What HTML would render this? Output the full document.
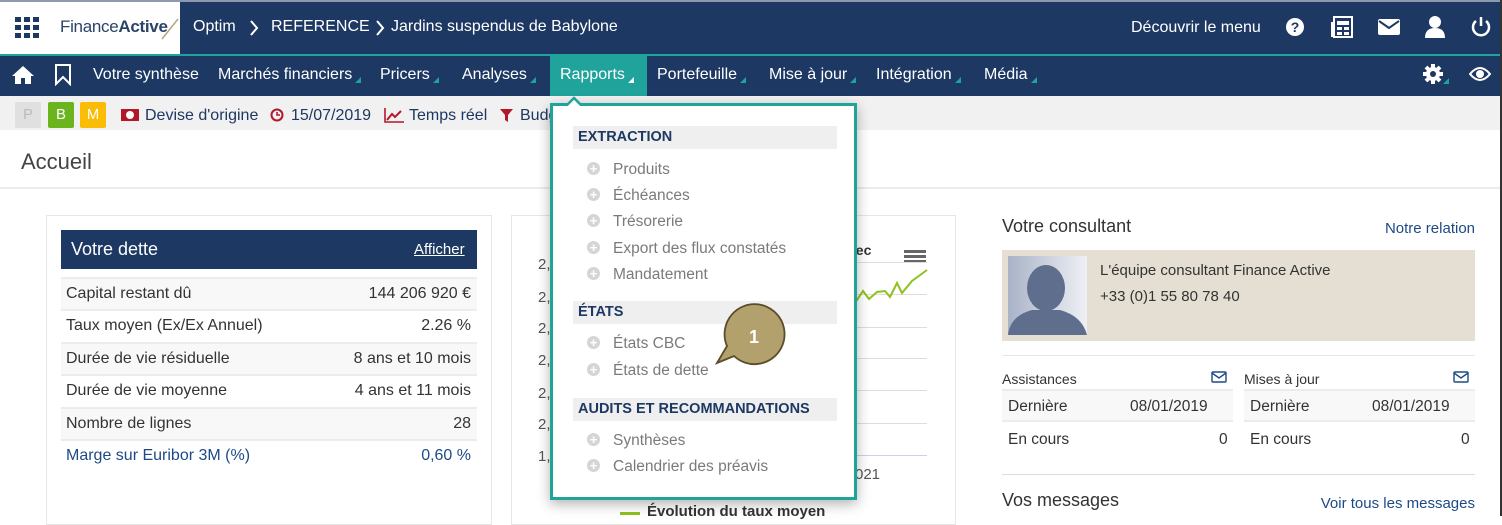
<!DOCTYPE html>
<html><head><meta charset="utf-8"><style>
*{box-sizing:border-box;margin:0;padding:0}
body{width:1502px;height:516px;overflow:hidden;position:relative;font-family:"Liberation Sans",sans-serif;background:#fff;color:#333}
.a{position:absolute;white-space:nowrap}
.top{left:0;top:0;width:1502px;height:54px;background:#1d3863;border-top:2px solid #8d9aae}
.tline{left:0;top:54px;width:1502px;height:2px;background:#1fa39a}
.nav{left:0;top:56px;width:1502px;height:40px;background:#1d3863}
.w{color:#fff;font-size:16px}
.n{position:absolute;top:66px;color:#fff;font-size:16px;white-space:nowrap}
.tri{display:inline-block;width:0;height:0;border-left:6px solid transparent;border-bottom:6px solid #1fa39a;margin-left:3px;vertical-align:-4px}
.tb{left:0;top:96px;width:1500px;height:34px;background:#f1f1f1}
.bl{color:#1d3863;font-size:16px}
.row{position:absolute;left:61px;width:416px;height:32px;border-top:2px solid #ececec;font-size:16px;line-height:30px;padding:0 6px 0 5px;color:#333}
.row span{float:right}
.dd{left:550px;top:103px;width:307px;height:397px;background:#fff;border:3px solid #1fa39a;box-shadow:0 4px 12px rgba(0,0,0,.3)}
.sec{position:absolute;left:20px;width:264px;height:23px;background:#efefef;color:#1d3863;font-weight:bold;font-size:14.5px;line-height:23px;padding-left:5px}
.it{position:absolute;left:34px;font-size:15.5px;color:#7a7a7a;white-space:nowrap}
.it:before{content:"+";display:inline-block;width:13px;height:13px;border-radius:50%;background:#d5d5d5;color:#fff;font-weight:bold;font-size:13px;line-height:13px;text-align:center;margin-right:13px;vertical-align:1px}
.g{position:absolute;left:855px;width:72px;height:1px;background:#ddd}
.yl{position:absolute;left:538px;font-size:15px;color:#555}
.ct{position:absolute;font-size:15.5px;color:#333}
</style></head><body>
<div class="a top"></div>
<div class="a" style="left:0;top:2px;width:180px;height:52px;background:#fff"></div>
<svg class="a" style="left:15px;top:17px" width="24" height="22"><g fill="#1d3863"><rect x="0" y="0" width="6" height="5"/><rect x="9" y="0" width="6" height="5"/><rect x="18" y="0" width="6" height="5"/><rect x="0" y="8" width="6" height="5"/><rect x="9" y="8" width="6" height="5"/><rect x="18" y="8" width="6" height="5"/><rect x="0" y="16" width="6" height="5"/><rect x="9" y="16" width="6" height="5"/><rect x="18" y="16" width="6" height="5"/></g></svg>
<div class="a" style="left:60px;top:17px;font-size:17px;color:#2a4468;letter-spacing:-.3px">Finance<b>Active</b></div>
<svg class="a" style="left:160px;top:17px" width="20" height="24"><line x1="2" y1="22" x2="18" y2="2" stroke="#b5a77c" stroke-width="1.5"/></svg>
<div class="a w" style="left:193px;top:18px">Optim</div>
<svg class="a" style="left:249px;top:20px" width="10" height="16"><path d="M2 1 L8 8 L2 15" stroke="#fff" stroke-width="2" fill="none"/></svg>
<div class="a w" style="left:271px;top:18px">REFERENCE</div>
<svg class="a" style="left:375px;top:20px" width="10" height="16"><path d="M2 1 L8 8 L2 15" stroke="#fff" stroke-width="2" fill="none"/></svg>
<div class="a w" style="left:391px;top:18px">Jardins suspendus de Babylone</div>
<div class="a w" style="left:1131px;top:19px;font-size:16px">Découvrir le menu</div>
<svg class="a" style="left:1285px;top:17px" width="20" height="20"><circle cx="10" cy="10" r="9" fill="#fff"/><text x="10" y="15" text-anchor="middle" font-size="14" font-weight="bold" fill="#1d3863" font-family="Liberation Sans">?</text></svg>
<svg class="a" style="left:1331px;top:16px" width="22" height="22"><rect x="3" y="1" width="18" height="20" fill="none" stroke="#fff" stroke-width="2"/><rect x="0" y="6" width="3" height="15" fill="#fff"/><rect x="6" y="5" width="12" height="4" fill="#fff"/><rect x="6" y="11" width="5" height="3" fill="#fff"/><rect x="13" y="11" width="5" height="3" fill="#fff"/><rect x="6" y="16" width="5" height="3" fill="#fff"/><rect x="13" y="16" width="5" height="3" fill="#fff"/></svg>
<svg class="a" style="left:1378px;top:19px" width="22" height="16"><rect width="22" height="16" rx="2" fill="#fff"/><path d="M1 2 L11 9 L21 2" stroke="#1d3863" stroke-width="2" fill="none"/></svg>
<svg class="a" style="left:1425px;top:16px" width="20" height="22"><circle cx="10" cy="6" r="6" fill="#fff"/><path d="M0 22 Q0 12 10 12 Q20 12 20 22Z" fill="#fff"/></svg>
<svg class="a" style="left:1470px;top:16px" width="22" height="22"><path d="M6 5 A8 8 0 1 0 16 5" stroke="#fff" stroke-width="2.5" fill="none"/><line x1="11" y1="1" x2="11" y2="10" stroke="#fff" stroke-width="2.5"/></svg>
<div class="a tline"></div>
<div class="a nav"></div>
<div class="a" style="left:550px;top:56px;width:97px;height:40px;background:#1fa39a"></div>
<svg class="a" style="left:12px;top:65px" width="22" height="19"><path d="M11 1 L0 11 L3 11 L3 19 L9 19 L9 13 L13 13 L13 19 L19 19 L19 11 L22 11Z" fill="#fff"/></svg>
<svg class="a" style="left:54px;top:64px" width="18" height="22"><path d="M2 1 H16 V20 L9 13 L2 20Z" stroke="#fff" stroke-width="2" fill="none"/></svg>
<div class="n" style="left:93px">Votre synthèse</div>
<div class="n" style="left:218px">Marchés financiers<i class="tri"></i></div>
<div class="n" style="left:380px">Pricers<i class="tri"></i></div>
<div class="n" style="left:462px">Analyses<i class="tri"></i></div>
<div class="n" style="left:560px">Rapports<i class="tri" style="border-bottom-color:#fff"></i></div>
<div class="n" style="left:657px">Portefeuille<i class="tri"></i></div>
<div class="n" style="left:769px">Mise à jour<i class="tri"></i></div>
<div class="n" style="left:876px">Intégration<i class="tri"></i></div>
<div class="n" style="left:984px">Média<i class="tri"></i></div>
<svg class="a" style="left:1423px;top:64px" width="22" height="22"><g fill="#fff"><circle cx="10" cy="10" r="7"/><g stroke="#fff" stroke-width="4"><line x1="10" y1="0" x2="10" y2="20"/><line x1="0" y1="10" x2="20" y2="10"/><line x1="3" y1="3" x2="17" y2="17"/><line x1="17" y1="3" x2="3" y2="17"/></g></g><circle cx="10" cy="10" r="3" fill="#1d3863"/></svg>
<i class="a tri" style="left:1440px;top:78px"></i>
<svg class="a" style="left:1469px;top:66px" width="22" height="16"><path d="M1 8 Q11 -4 21 8 Q11 20 1 8Z" stroke="#fff" stroke-width="2" fill="none"/><circle cx="11" cy="8" r="4" fill="#fff"/></svg>
<div class="a tb"></div>
<div class="a" style="left:15px;top:102px;width:26px;height:26px;background:#e0e0e0;color:#bbb;font-size:15px;text-align:center;line-height:26px;border-radius:2px">P</div>
<div class="a" style="left:48px;top:102px;width:26px;height:26px;background:#6ab41d;color:#fff;font-size:15px;text-align:center;line-height:26px;border-radius:2px">B</div>
<div class="a" style="left:80px;top:102px;width:26px;height:26px;background:#fbbc06;color:#fff;font-size:15px;text-align:center;line-height:26px;border-radius:2px">M</div>
<svg class="a" style="left:121px;top:109px" width="18" height="12"><rect width="18" height="12" fill="#b3182a"/><ellipse cx="9" cy="6" rx="4" ry="4" fill="#fff"/></svg>
<div class="a bl" style="left:145px;top:107px">Devise d'origine</div>
<svg class="a" style="left:270px;top:108px" width="14" height="14"><circle cx="7" cy="7" r="5.5" stroke="#b3182a" stroke-width="2" fill="none"/><path d="M7 4 V7 H10" stroke="#b3182a" stroke-width="1.6" fill="none"/></svg>
<div class="a bl" style="left:291px;top:107px">15/07/2019</div>
<svg class="a" style="left:384px;top:108px" width="20" height="15"><path d="M1 0 V14 H20" stroke="#b3182a" stroke-width="1.6" fill="none"/><path d="M3 12 L8 6 L11 9 L17 3" stroke="#b3182a" stroke-width="2" fill="none"/></svg>
<div class="a bl" style="left:409px;top:107px">Temps réel</div>
<svg class="a" style="left:500px;top:109px" width="13" height="13"><path d="M0 0 H13 L8 6 V13 L5 11 V6Z" fill="#b3182a"/></svg>
<div class="a bl" style="left:520px;top:107px">Budget</div>
<div class="a" style="left:21px;top:149px;font-size:22px;color:#444">Accueil</div>
<div class="a" style="left:0;top:187px;width:1500px;height:2px;background:#ececec"></div>
<div class="a" style="left:1500px;top:0;width:2px;height:516px;background:#333"></div>
<!-- left panel -->
<div class="a" style="left:46px;top:215px;width:446px;height:310px;border:1px solid #e6e6e6"></div>
<div class="a" style="left:61px;top:230px;width:416px;height:39px;background:#1d3863"></div>
<div class="a" style="left:71px;top:239px;font-size:18px;color:#fff">Votre dette</div>
<div class="a" style="left:414px;top:241px;font-size:15px;color:#fff;text-decoration:underline">Afficher</div>
<div class="row" style="top:277px;background:#f8f8f8">Capital restant dû<span>144 206 920 €</span></div>
<div class="row" style="top:309px">Taux moyen (Ex/Ex Annuel)<span>2.26 %</span></div>
<div class="row" style="top:342px;background:#f8f8f8">Durée de vie résiduelle<span>8 ans et 10 mois</span></div>
<div class="row" style="top:374px">Durée de vie moyenne<span>4 ans et 11 mois</span></div>
<div class="row" style="top:407px;background:#f8f8f8">Nombre de lignes<span>28</span></div>
<div class="row" style="top:439px;color:#1d4a85">Marge sur Euribor 3M (%)<span>0,60 %</span></div>
<!-- chart panel -->
<div class="a" style="left:511px;top:215px;width:445px;height:310px;border:1px solid #e6e6e6"></div>
<div class="yl" style="top:256px">2,</div><div class="yl" style="top:289px">2,</div><div class="yl" style="top:320px">2,</div><div class="yl" style="top:352px">2,</div><div class="yl" style="top:385px">2,</div><div class="yl" style="top:416px">2,</div><div class="yl" style="top:448px">1,</div>
<div class="a" style="left:848px;top:242px;font-size:14px;font-weight:bold;color:#333">vec</div>
<div class="a" style="left:904px;top:250px;width:22px;height:3px;background:#666;box-shadow:0 5px 0 #666,0 10px 0 #666"></div>
<div class="g" style="top:262px"></div><div class="g" style="top:294px"></div><div class="g" style="top:327px"></div><div class="g" style="top:358px"></div><div class="g" style="top:390px"></div><div class="g" style="top:423px"></div><div class="g" style="top:455px;background:#c8d4e6"></div>
<svg class="a" style="left:855px;top:265px" width="75" height="45"><path d="M0 38 L8 26 L14 34 L22 27 L30 26 L35 32 L42 18 L47 28 L57 16 L72 5" stroke="#8dc21f" stroke-width="2" fill="none"/></svg>
<div class="a" style="left:855px;top:466px;font-size:15px;color:#555">021</div>
<div class="a" style="left:620px;top:512px;width:20px;height:3px;background:#8dc21f"></div>
<div class="a" style="left:647px;top:503px;font-size:15px;font-weight:bold;color:#333">Évolution du taux moyen</div>
<!-- dropdown -->
<div class="a dd">
<div class="sec" style="top:20px">EXTRACTION</div>
<div class="it" style="top:55px">Produits</div>
<div class="it" style="top:81px">Échéances</div>
<div class="it" style="top:107px">Trésorerie</div>
<div class="it" style="top:134px">Export des flux constatés</div>
<div class="it" style="top:160px">Mandatement</div>
<div class="sec" style="top:195px">ÉTATS</div>
<div class="it" style="top:229px">États CBC</div>
<div class="it" style="top:256px">États de dette</div>
<div class="sec" style="top:292px">AUDITS ET RECOMMANDATIONS</div>
<div class="it" style="top:326px">Synthèses</div>
<div class="it" style="top:352px">Calendrier des préavis</div>
</div>
<svg class="a" style="left:566px;top:96px" width="16" height="10"><path d="M0 10 L8 2 L16 10" fill="#fff" stroke="#1fa39a" stroke-width="2.5"/></svg>
<svg class="a" style="left:710px;top:300px" width="82" height="72"><path d="M7 63 L24 56 A30 30 0 1 0 17 46Z" fill="#b2a06d" stroke="#5b4c2a" stroke-width="1.8"/><text x="44" y="43" text-anchor="middle" font-size="18" font-weight="bold" fill="#fff" font-family="Liberation Sans">1</text></svg>
<!-- right column -->
<div class="a" style="left:1002px;top:216px;font-size:18px;color:#333">Votre consultant</div>
<div class="a" style="right:27px;top:220px;font-size:15px;color:#1d4a85">Notre relation</div>
<div class="a" style="left:1002px;top:250px;width:473px;height:91px;background:#e4dfd2"></div>
<svg class="a" style="left:1008px;top:256px" width="79" height="79"><defs><linearGradient id="bg" x1="0" x2="1"><stop offset="0" stop-color="#a9b3c8"/><stop offset="1" stop-color="#eef0f4"/></linearGradient></defs><rect width="79" height="79" fill="url(#bg)"/><ellipse cx="38" cy="32" rx="19" ry="23" fill="#5f6e8d"/><path d="M0 79 Q2 60 24 54 L52 54 Q74 60 79 79Z" fill="#5f6e8d"/></svg>
<div class="a" style="left:1100px;top:262px;font-size:15px;color:#333">L'équipe consultant Finance Active</div>
<div class="a" style="left:1100px;top:288px;font-size:15px;color:#333">+33 (0)1 55 80 78 40</div>
<div class="a" style="left:1002px;top:355px;width:473px;height:1px;background:#e6e6e6"></div>
<div class="a" style="left:1002px;top:371px;font-size:14px;color:#333">Assistances</div>
<div class="a" style="left:1244px;top:371px;font-size:14px;color:#333">Mises à jour</div>
<svg class="a" style="left:1211px;top:371px" width="16" height="12"><rect x="1" y="1" width="14" height="10" rx="1" stroke="#1d4a85" stroke-width="1.4" fill="none"/><path d="M1 2 L8 7 L15 2" stroke="#1d4a85" stroke-width="1.4" fill="none"/></svg>
<svg class="a" style="left:1453px;top:371px" width="16" height="12"><rect x="1" y="1" width="14" height="10" rx="1" stroke="#1d4a85" stroke-width="1.4" fill="none"/><path d="M1 2 L8 7 L15 2" stroke="#1d4a85" stroke-width="1.4" fill="none"/></svg>
<div class="a" style="left:1002px;top:389px;width:231px;height:33px;background:#f8f8f8;border-top:2px solid #ececec;border-bottom:2px solid #ececec"></div>
<div class="a" style="left:1244px;top:389px;width:231px;height:33px;background:#f8f8f8;border-top:2px solid #ececec;border-bottom:2px solid #ececec"></div>
<div class="ct" style="left:1008px;top:398px">Dernière</div><div class="ct" style="left:1130px;top:398px">08/01/2019</div>
<div class="ct" style="left:1250px;top:398px">Dernière</div><div class="ct" style="left:1372px;top:398px">08/01/2019</div>
<div class="ct" style="left:1008px;top:431px">En cours</div><div class="ct" style="left:1219px;top:431px">0</div>
<div class="ct" style="left:1250px;top:431px">En cours</div><div class="ct" style="left:1461px;top:431px">0</div>
<div class="a" style="left:1002px;top:474px;width:473px;height:1px;background:#e0dcd0"></div>
<div class="a" style="left:1002px;top:490px;font-size:18px;color:#333">Vos messages</div>
<div class="a" style="right:27px;top:495px;font-size:15px;color:#1d4a85">Voir tous les messages</div>
</body></html>
